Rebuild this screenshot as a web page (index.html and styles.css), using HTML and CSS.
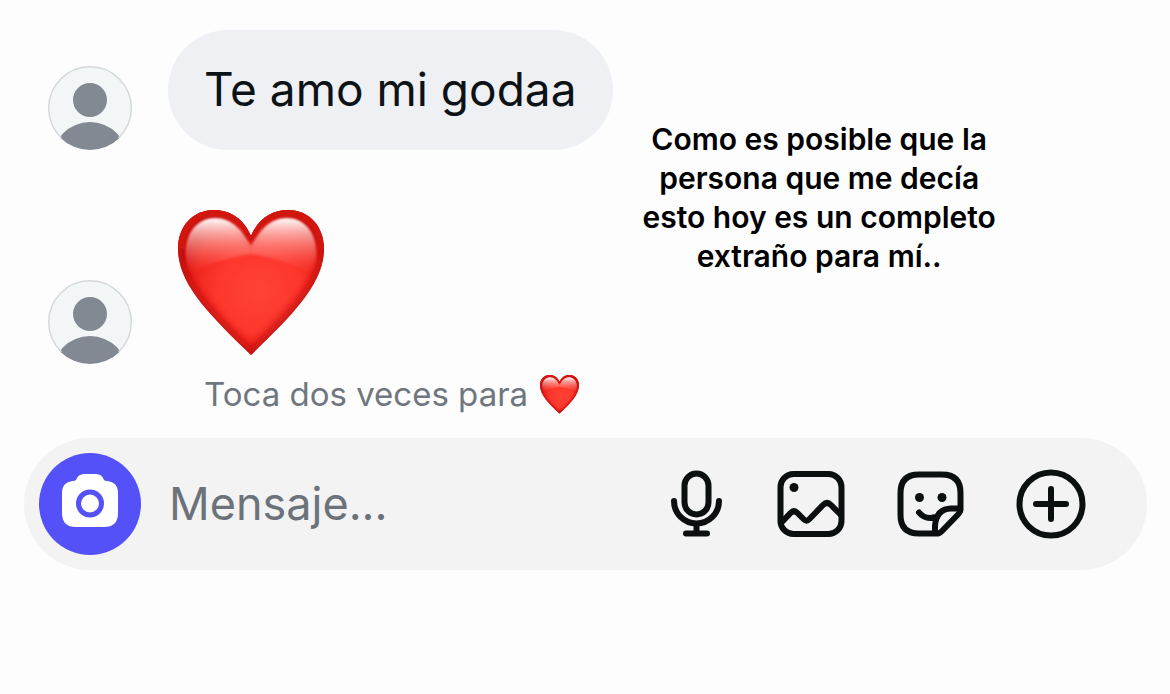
FILE: index.html
```html
<!DOCTYPE html>
<html lang="es">
<head>
<meta charset="utf-8">
<meta name="viewport" content="width=device-width, initial-scale=1">
<title>Chat</title>
<link rel="stylesheet" href="styles.css">
</head>
<body>
<svg class="defs" width="0" height="0" aria-hidden="true">
  <defs>
    <radialGradient id="heart-fill" gradientUnits="userSpaceOnUse" cx="80" cy="80" r="82">
      <stop offset="0" stop-color="#ff4236"/>
      <stop offset="0.5" stop-color="#fd372c"/>
      <stop offset="0.8" stop-color="#ee251d"/>
      <stop offset="1" stop-color="#cc0f0e"/>
    </radialGradient>
    <linearGradient id="heart-shine" x1="0" y1="0" x2="0" y2="1">
      <stop offset="0" stop-color="#fff"/>
      <stop offset="0.2" stop-color="#ffe0dd" stop-opacity="0.8"/>
      <stop offset="0.6" stop-color="#ff9b94" stop-opacity="0.45"/>
      <stop offset="1" stop-color="#ff5a50" stop-opacity="0"/>
    </linearGradient>
    <filter id="heart-soft" x="-10%" y="-10%" width="120%" height="120%">
      <feGaussianBlur stdDeviation="1.2"/>
    </filter>
    <filter id="heart-shade" x="-10%" y="-10%" width="120%" height="120%">
      <feGaussianBlur stdDeviation="4"/>
    </filter>
    <clipPath id="heart-clip">
      <path d="M73 26C66 9 52 0 36 0C15 0 0 16 0 39C0 75 34 107 73 145C112 107 146 75 146 39C146 16 131 0 110 0C94 0 80 9 73 26Z"/>
    </clipPath>
    <clipPath id="avatar-clip"><circle cx="42" cy="42" r="42"/></clipPath>
    <symbol id="heart" viewBox="0 0 146 146">
      <g clip-path="url(#heart-clip)">
        <rect width="146" height="146" fill="url(#heart-fill)"/>
        <path d="M73 26C66 9 52 0 36 0C15 0 0 16 0 39C0 75 34 107 73 145C112 107 146 75 146 39C146 16 131 0 110 0C94 0 80 9 73 26Z" fill="none" stroke="#c00808" stroke-width="9" filter="url(#heart-shade)"/>
        <path d="M73 29C66 11 52 2 36 2C15 2 2 18 2 39" fill="none" stroke="#d1120e" stroke-width="9" filter="url(#heart-soft)"/>
        <path d="M73 29C80 11 94 2 110 2C131 2 144 18 144 39" fill="none" stroke="#d1120e" stroke-width="9" filter="url(#heart-soft)"/>
        <path d="M8 50C5 23 20 8 37 8C54 8 64 20 73 36V44C50 48 28 54 10 64Z" fill="url(#heart-shine)" filter="url(#heart-soft)"/>
        <path d="M138 50C141 23 126 8 109 8C92 8 82 20 73 36V44C96 48 118 54 136 64Z" fill="url(#heart-shine)" filter="url(#heart-soft)"/>
      </g>
    </symbol>
    <symbol id="avatar" viewBox="0 0 84 84">
      <circle cx="42" cy="42" r="42" fill="#f2f6f7"/>
      <g clip-path="url(#avatar-clip)" fill="#838993">
        <circle cx="42" cy="34" r="17"/>
        <circle cx="42" cy="94" r="38"/>
      </g>
      <path d="M13.500 72A41.300 41.300 0 1 1 70.500 72" fill="none" stroke="#d5d8da" stroke-width="1.400"/>
    </symbol>
  </defs>
</svg>

<div class="screen">
  <main class="conversation">
    <section class="messages">
      <div class="message">
        <svg class="avatar" role="img" aria-label="Contacto"><use href="#avatar"/></svg>
        <p class="bubble">Te amo mi godaa</p>
      </div>
      <div class="message message-emoji">
        <svg class="avatar" role="img" aria-label="Contacto"><use href="#avatar"/></svg>
        <svg class="big-heart" role="img" aria-label="Corazón"><use href="#heart"/></svg>
      </div>
      <p class="hint">Toca dos veces para <svg class="small-heart" role="img" aria-label="corazón"><use href="#heart"/></svg></p>
    </section>
    <p class="caption">Como es posible que la<br>persona que me decía<br>esto hoy es un completo<br>extraño para mí..</p>
  </main>

  <form class="composer">
    <button class="camera" type="button" aria-label="Cámara">
      <svg viewBox="0 0 102 102">
        <path d="M37 27Q39 21 45 21H57Q63 21 65 27Q66 28 68 28Q79 29 79 40V60Q79 74 65 74H37Q23 74 23 60V40Q23 29 34 28Q36 28 37 27Z" fill="#fff"/>
        <circle cx="51" cy="50.500" r="11.500" fill="none" stroke="#5551f5" stroke-width="5"/>
      </svg>
    </button>
    <input class="field" type="text" placeholder="Mensaje..." aria-label="Mensaje">
    <div class="actions">
      <button class="action" type="button" aria-label="Mensaje de voz">
        <svg viewBox="0 0 72 72">
          <rect x="29.500" y="5.500" width="24" height="41" rx="12"/>
          <path d="M19 33A22.500 22.500 0 0 0 64 33M41.500 56V65M31 65.500H52"/>
        </svg>
      </button>
      <button class="action" type="button" aria-label="Foto">
        <svg viewBox="0 0 72 72">
          <rect x="5.500" y="6" width="61" height="60" rx="13"/>
          <path d="M6 55L15.500 45Q19 41.500 22.500 45L28.500 51Q31.500 54 34.500 51L48 37Q52 33 56 37L66 47"/>
          <circle class="dot" cx="19" cy="19.500" r="4.500"/>
        </svg>
      </button>
      <button class="action" type="button" aria-label="Sticker">
        <svg viewBox="0 0 72 72">
          <path d="M43 65.500H24Q5.500 65.500 5.500 47V25Q5.500 6.500 24 6.500H47Q65.500 6.500 65.500 25V42Q65.500 44 63 46.500L47 63Q45 65.500 42 65.500"/>
          <path d="M40 65V58Q41 41 56 40.500H65M24 44.500C28 49.500 34 51 41 49"/>
          <circle class="dot" cx="24.500" cy="29.500" r="4.500"/>
          <circle class="dot" cx="47" cy="29.500" r="4.500"/>
        </svg>
      </button>
      <button class="action" type="button" aria-label="Más">
        <svg viewBox="0 0 72 72">
          <circle cx="36" cy="36" r="31.500"/>
          <path d="M36 21V51M21 36H51"/>
        </svg>
      </button>
    </div>
  </form>
</div>
</body>
</html>
```

FILE: styles.css
```css
* {
  box-sizing: border-box;
}

body {
  margin: 0;
  background: #fdfdfd;
  font-family: Inter, "Liberation Sans", sans-serif;
  color: #0d1216;
}

p {
  margin: 0;
}

.defs {
  display: block;
  height: 0;
}

.screen {
  padding: 30px 23px 0 24px;
}

.conversation {
  display: flex;
  align-items: flex-start;
  gap: 30px;
  padding-left: 24px;
}

.message {
  display: flex;
  align-items: flex-end;
  gap: 36px;
}

.message-emoji {
  gap: 46px;
  padding-top: 60px;
}

.avatar {
  flex: none;
  width: 84px;
  height: 84px;
}

.message-emoji .avatar {
  margin-bottom: -8px;
}

.bubble {
  padding: 29px 36px 31px;
  border-radius: 60px;
  background: #eff0f4;
  font-size: 46px;
  line-height: 60px;
  white-space: nowrap;
}

.big-heart {
  width: 146px;
  height: 146px;
}

.hint {
  display: flex;
  align-items: center;
  gap: 12px;
  margin-top: 18px;
  padding-left: 156px;
  color: #70767f;
  font-size: 33px;
  line-height: 40px;
  white-space: nowrap;
}

.small-heart {
  width: 39px;
  height: 39px;
}

.caption {
  padding-top: 90px;
  color: #000;
  font-size: 30px;
  font-weight: 600;
  line-height: 39px;
  text-align: center;
  white-space: nowrap;
}

.composer {
  display: flex;
  align-items: center;
  margin-top: 24px;
  padding: 15px 60px 15px 15px;
  border-radius: 66px;
  background: #f3f3f3;
}

button {
  flex: none;
  padding: 0;
  border: 0;
  background: none;
  cursor: pointer;
}

button svg {
  display: block;
  width: 100%;
  height: 100%;
}

.camera {
  width: 102px;
  height: 102px;
  border-radius: 50%;
  background: #5551f8;
}

.field {
  flex: 1;
  min-width: 0;
  height: 72px;
  padding: 0 0 2px;
  margin-left: 28px;
  border: 0;
  outline: 0;
  background: none;
  color: #0d1216;
  font-family: inherit;
  font-size: 45px;
}

.field::placeholder {
  color: #6b727a;
  opacity: 1;
}

.actions {
  display: flex;
  gap: 48px;
}

.action {
  width: 72px;
  height: 72px;
}

.action svg {
  fill: none;
  stroke: #0b0f10;
  stroke-width: 6;
  stroke-linecap: round;
  stroke-linejoin: round;
}

.action .dot {
  fill: #0b0f10;
  stroke: none;
}
```
